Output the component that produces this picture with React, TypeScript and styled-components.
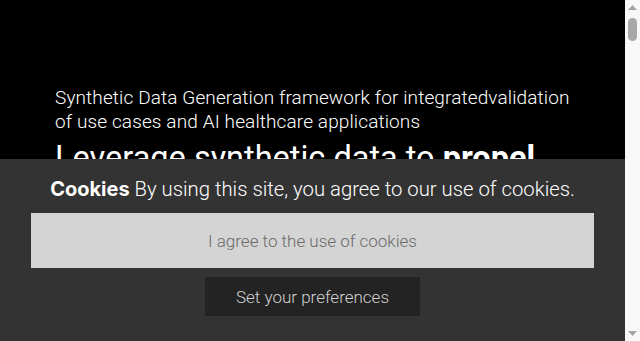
import React from "react";
import styled, { createGlobalStyle } from "styled-components";

const GlobalStyle = createGlobalStyle`
  html, body {
    margin: 0;
    padding: 0;
    height: 100%;
    background: #000;
    overflow: hidden;
  }
  body {
    font-family: Roboto, "Liberation Sans", sans-serif;
    color: #fff;
  }
  #root { height: 100%; }
  * { box-sizing: border-box; }
`;

const Layout = styled.div`
  display: flex;
  height: 100vh;
`;

const Scroller = styled.div`
  flex: 1;
  min-width: 0;
  overflow-y: auto;
  background: #000;
  scrollbar-width: none;
  &::-webkit-scrollbar { display: none; }
`;

const Rail = styled.div`
  width: 15px;
  flex: none;
  display: flex;
  flex-direction: column;
  background: #f8f8f8;
`;

const ArrowButton = styled.div`
  height: 15px;
  display: flex;
  align-items: center;
  justify-content: center;
  color: #a3a3a3;
`;

const Track = styled.div`
  flex: 1;
  padding: 3px 3px 0 3px;
`;

const Thumb = styled.div`
  width: 9px;
  height: 23px;
  border-radius: 5px;
  background: #a8a8a8;
`;

const Hero = styled.section`
  padding: 86px 30px 0 55px;
`;

const Subtitle = styled.p`
  margin: 0;
  max-width: 525px;
  font-size: 19px;
  font-weight: 300;
  letter-spacing: 0.12px;
  line-height: 23.6px;
  color: #fff;
`;

const Title = styled.h1`
  margin: 6px 0 0;
  font-size: 32.5px;
  font-weight: 400;
  line-height: 38px;
  color: #fff;
  white-space: nowrap;

  strong {
    font-weight: 700;
  }
`;

const Filler = styled.section`
  height: 4400px;
`;

const Banner = styled.div`
  position: sticky;
  bottom: 0;
  background: #333333;
  padding: 17px 31px 25px;
  display: flex;
  flex-direction: column;
  align-items: center;
`;

const BannerText = styled.p`
  margin: 0 0 11px;
  font-size: 20.3px;
  font-weight: 300;
  line-height: 26px;
  color: #fff;
  text-align: center;
  white-space: nowrap;

  strong {
    font-family: Inter, Roboto, sans-serif;
    font-size: 20px;
    font-weight: 700;
  }
`;

const AgreeButton = styled.button`
  width: 100%;
  height: 55px;
  border: none;
  background: #d4d4d4;
  color: #6a6a6a;
  font-family: Roboto, "Liberation Sans", sans-serif;
  font-size: 17px;
  font-weight: 300;
  cursor: pointer;
`;

const PrefButton = styled.button`
  margin-top: 9px;
  width: 215px;
  height: 39px;
  border: none;
  background: #232323;
  color: #d0d0d0;
  font-family: Roboto, "Liberation Sans", sans-serif;
  font-size: 17px;
  font-weight: 300;
  cursor: pointer;
`;

const Triangle = ({ down }: { down?: boolean }) => (
  <svg width="9" height="5" viewBox="0 0 9 5" aria-hidden="true">
    <path d={down ? "M0 0 L9 0 L4.5 5 Z" : "M0 5 L9 5 L4.5 0 Z"} fill="currentColor" />
  </svg>
);

export default function App() {
  return (
    <>
      <GlobalStyle />
      <Layout>
        <Scroller>
          <Hero>
            <Subtitle>
              Synthetic Data Generation framework for integratedvalidation of
              use cases and AI healthcare applications
            </Subtitle>
            <Title>
              Leverage synthetic data to <strong>propel</strong>
            </Title>
          </Hero>
          <Filler />
          <Banner>
            <BannerText>
              <strong>Cookies</strong> By using this site, you agree to our use
              of cookies.
            </BannerText>
            <AgreeButton>I agree to the use of cookies</AgreeButton>
            <PrefButton>Set your preferences</PrefButton>
          </Banner>
        </Scroller>
        <Rail>
          <ArrowButton>
            <Triangle />
          </ArrowButton>
          <Track>
            <Thumb />
          </Track>
          <ArrowButton>
            <Triangle down />
          </ArrowButton>
        </Rail>
      </Layout>
    </>
  );
}
